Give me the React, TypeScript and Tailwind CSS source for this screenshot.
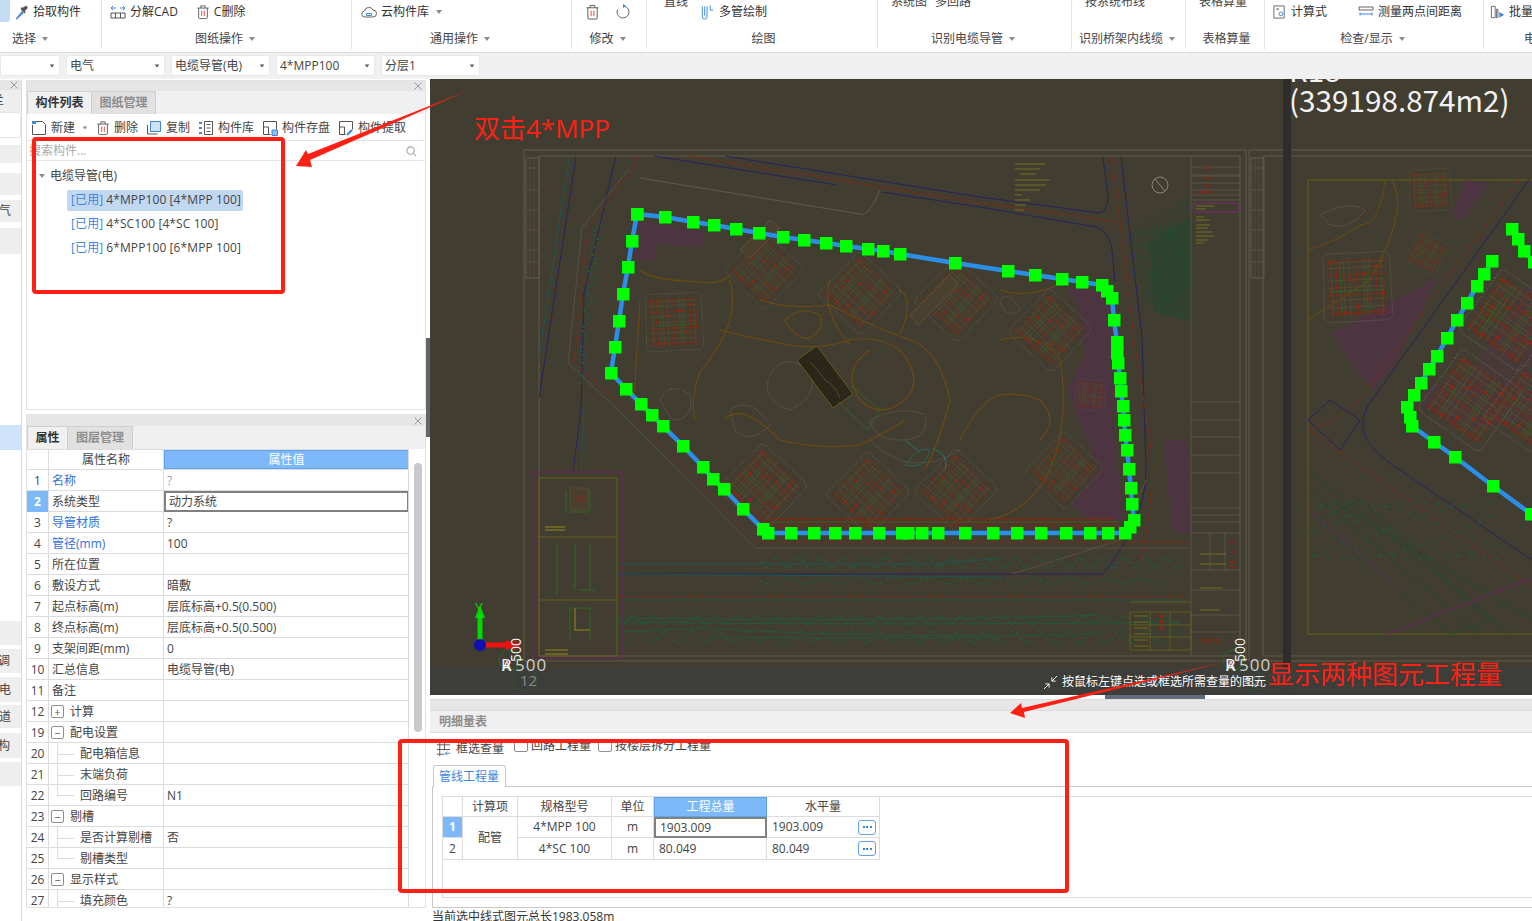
import type { ReactNode } from 'react';

const FONT = "[font-family:'Open_Sans','Noto_Sans_CJK_SC',sans-serif]";

function Caret({ className = '' }: { className?: string }) {
  return <span className={`inline-block w-0 h-0 border-x-[3.5px] border-x-transparent border-t-[4px] border-t-[#8a8a8a] ${className}`} />;
}

function Ico({ children, className = 'w-[16px] h-[16px]' }: { children: ReactNode; className?: string }) {
  return (
    <svg viewBox="0 0 16 16" fill="none" className={`shrink-0 ${className}`}>
      {children}
    </svg>
  );
}

function TrashIcon({ className }: { className?: string }) {
  return (
    <Ico className={className}>
      <path d="M1.500 3.500h13M5.500 3.500V1h5v2.500M3 3.500v10.800a1.200 1.200 0 0 0 1.200 1.200h7.600a1.200 1.200 0 0 0 1.200-1.200V3.500" stroke="#555" />
      <path d="M6.500 6.500v6M9.500 6.500v6" stroke="#e23a2e" />
    </Ico>
  );
}

function RibbonGroup({ className, label, caret = true, labelClass, children }: { className: string; label: string; caret?: boolean; labelClass?: string; children?: ReactNode }) {
  const align = labelClass ?? (caret ? 'justify-center pr-[3px]' : 'justify-center pl-[3px]');
  return (
    <div className={`h-[49px] shrink-0 flex flex-col border-r border-[#e2e2e2] ${className}`}>
      <div className="h-[29px] pt-[1px] overflow-hidden flex items-start">{children}</div>
      <div className={`h-[20px] flex items-center gap-[6px] text-[#444] ${align}`}>
        <span>{label}</span>
        {caret && <Caret />}
      </div>
    </div>
  );
}

function RibbonItem({ icon, text, className = '' }: { icon: ReactNode; text: string; className?: string }) {
  return (
    <div className={`h-[22px] flex items-center gap-[4px] whitespace-nowrap ${className}`}>
      {icon}
      <span>{text}</span>
    </div>
  );
}

function Ribbon() {
  return (
    <div className="h-[53px] shrink-0 bg-white border-b border-[#dcdcdc] flex overflow-hidden">
      <RibbonGroup className="w-[102px]" label="选择" labelClass="justify-start pl-[12px]">
        <div className="w-[10px] h-[22px] mt-[-1px] bg-[#c5dcf5] rounded-br-[3px]" />
        <RibbonItem
          className="ml-[4px]"
          text="拾取构件"
          icon={
            <Ico className="w-[15px] h-[17px]">
              <path d="M1.500 15 8.500 6.500l2 2L3 15.500z" fill="#4a86d8" />
              <path d="M7 4.500l4.500 4.500 1-1.500-1-1 2.500-2.500a1.500 1.500 0 0 0-2.500-2.500L9 3 8 2z" fill="#555" />
            </Ico>
          }
        />
      </RibbonGroup>
      <RibbonGroup className="w-[250px]" label="图纸操作">
        <RibbonItem
          className="ml-[8px]"
          text="分解CAD"
          icon={
            <Ico>
              <path d="M1 9h14v5H1zM5.500 9v5M10.500 9v5" stroke="#555" />
              <path d="M1 4h5M3 2 1 4l2 2M15 4h-5M13 2l2 2-2 2" stroke="#3b86e0" />
            </Ico>
          }
        />
        <RibbonItem className="ml-[18px]" text="C删除" icon={<TrashIcon className="w-[14px] h-[18px]" />} />
      </RibbonGroup>
      <RibbonGroup className="w-[220px]" label="通用操作">
        <RibbonItem
          className="ml-[9px]"
          text="云构件库"
          icon={
            <Ico>
              <path d="M4 13a3 3 0 0 1-.5-6A4.500 4.500 0 0 1 12 6a3.500 3.500 0 0 1 0 7z" stroke="#666" />
              <path d="M5.500 9.500h5v2h-5z" stroke="#3b86e0" />
            </Ico>
          }
        />
        <Caret className="ml-[7px] mt-[9px]" />
      </RibbonGroup>
      <RibbonGroup className="w-[75px]" label="修改">
        <div className="h-[22px] flex items-center gap-[15px] pl-[13px]">
          <TrashIcon className="w-[15px] h-[18px]" />
          <Ico>
            <path d="M8 2a6 6 0 1 1-5.500 3.600" stroke="#666" />
            <path d="M8 0v4l3-2z" fill="#3b86e0" />
          </Ico>
        </div>
      </RibbonGroup>
      <RibbonGroup className="w-[231px]" label="绘图" caret={false}>
        <span className="ml-[17px] mt-[-7px] leading-[16px] text-[#444]">直线</span>
        <RibbonItem
          className="ml-[12px]"
          text="多管绘制"
          icon={
            <Ico className="w-[15px] h-[18px]">
              <path d="M2.500 2v11a2.500 2.500 0 0 0 5 0V2M5 2v10M11 1v5h3" stroke="#3b86e0" />
            </Ico>
          }
        />
      </RibbonGroup>
      <RibbonGroup className="w-[194px]" label="识别电缆导管">
        <span className="ml-[13px] mt-[-7px] leading-[16px] text-[#444]">系统图</span>
        <span className="ml-[8px] mt-[-7px] leading-[16px] text-[#444]">多回路</span>
      </RibbonGroup>
      <RibbonGroup className="w-[114px]" label="识别桥架内线缆">
        <span className="ml-[13px] mt-[-7px] leading-[16px] text-[#444]">按系统布线</span>
      </RibbonGroup>
      <RibbonGroup className="w-[79px]" label="表格算量" caret={false}>
        <span className="ml-[13px] mt-[-7px] leading-[16px] text-[#444]">表格算量</span>
      </RibbonGroup>
      <RibbonGroup className="w-[219px]" label="检查/显示">
        <RibbonItem
          className="ml-[7px]"
          text="计算式"
          icon={
            <Ico className="w-[15px] h-[18px]">
              <path d="M2 1.500h11v13H2z" stroke="#666" />
              <path d="M5 4l2 2M7 4 5 6" stroke="#555" />
              <circle cx="9.500" cy="10" r="2" stroke="#3b86e0" />
            </Ico>
          }
        />
        <RibbonItem
          className="ml-[31px]"
          text="测量两点间距离"
          icon={
            <Ico>
              <path d="M1 3h14v3H1z" stroke="#666" />
              <path d="M2 10h12M2 8.500v3M14 8.500v3" stroke="#3b86e0" />
            </Ico>
          }
        />
      </RibbonGroup>
      <div className="w-[110px] shrink-0 h-[49px] flex flex-col">
        <div className="h-[29px] pt-[1px]">
          <RibbonItem
            className="ml-[6px]"
            text="批量选择"
            icon={
              <Ico className="w-[15px] h-[18px]">
                <path d="M1.500 2h4v12h-4zM7 5h1.500v9H7z" stroke="#666" />
                <path d="M10 8l5 3-5 3z" fill="#3b86e0" />
              </Ico>
            }
          />
        </div>
        <div className="h-[20px] flex items-center pl-[40px] text-[#444] whitespace-nowrap">电缆导管</div>
      </div>
    </div>
  );
}

function Select({ text, className = 'w-[99px]' }: { text: string; className?: string }) {
  return (
    <div className={`h-[21px] bg-white rounded-[3px] border border-[#e8e8e8] flex items-center justify-between pl-[3px] pr-[4px] ${className}`}>
      <span className="text-[#444]">{text}</span>
      <Caret className="border-t-[#555] scale-75" />
    </div>
  );
}

function SelectBar() {
  return (
    <div className="h-[26px] shrink-0 bg-[#f0f0f0] flex gap-[6px] pt-[2px]">
      <Select text="" className="w-[60px]" />
      <Select text="电气" />
      <Select text="电缆导管(电)" />
      <Select text="4*MPP100" />
      <Select text="分层1" />
    </div>
  );
}

function CloseX() {
  return (
    <svg viewBox="0 0 8 8" className="w-[8px] h-[8px]" fill="none" stroke="#9a9a9a">
      <path d="M.5.5l7 7M7.500.5l-7 7" />
    </svg>
  );
}

const railItems = [
  { cls: 'h-[22px] bg-[#eeeeee]', text: '兰', inset: 'ml-[-8px]' },
  { cls: 'h-[26px] bg-white border border-l-0 border-[#e6e6e6] rounded-r-[3px]', text: '' },
  { cls: 'h-[18px] mt-[7px] bg-[#eeeeee]', text: '' },
  { cls: 'h-[22px] mt-[10px] bg-[#eeeeee]', text: '' },
  { cls: 'h-[22px] mt-[5px] bg-[#eeeeee]', text: '气', inset: 'ml-[-1px]' },
  { cls: 'h-[26px] mt-[6px] bg-[#eeeeee]', text: '' },
  { cls: 'h-[25px] mt-[171px] bg-[#cfe4fb]', text: '' },
  { cls: 'h-[24px] mt-[171px] bg-[#eeeeee]', text: '' },
  { cls: 'h-[24px] mt-[4px] bg-[#eeeeee]', text: '调', inset: 'ml-[-2px]' },
  { cls: 'h-[25px] mt-[4px] bg-[#eeeeee]', text: '电', inset: 'ml-[-1px]' },
  { cls: 'h-[23px] mt-[3px] bg-[#eeeeee]', text: '道', inset: 'ml-[-1px]' },
  { cls: 'h-[25px] mt-[5px] bg-[#eeeeee]', text: '构', inset: 'ml-[-2px]' },
  { cls: 'h-[24px] mt-[4px] bg-[#eeeeee]', text: '' },
];

function Rail() {
  return (
    <div className="w-[22px] shrink-0 border-r border-[#dcdcdc] flex flex-col pt-[1px] overflow-hidden">
      <div className="h-[10px] bg-[#e6e6e6] shrink-0 flex items-center justify-end pr-[3px]">
        <CloseX />
      </div>
      {railItems.map((item, i) => (
        <div key={i} className={`shrink-0 flex items-center overflow-hidden text-[#444] ${item.cls}`}>
          <span className={item.inset}>{item.text}</span>
        </div>
      ))}
    </div>
  );
}

function TabStrip({ tabs }: { tabs: { label: string; w: string; active?: boolean }[] }) {
  return (
    <div className="h-[23px] bg-[#f0f0f0] flex">
      {tabs.map((t) => (
        <div
          key={t.label}
          className={`${t.w} flex items-center justify-center border border-b-0 border-[#cfcfcf] mr-[-1px] font-bold ${t.active ? 'bg-[#f0f0f0] text-[#333]' : 'bg-[#e1e1e1] text-[#8d8d8d]'}`}
        >
          {t.label}
        </div>
      ))}
    </div>
  );
}

const treeRows = [
  { label: '4*MPP100 [4*MPP 100]', active: true },
  { label: '4*SC100 [4*SC 100]' },
  { label: '6*MPP100 [6*MPP 100]' },
];

function ComponentList() {
  const tools: { text: string; icon: ReactNode; caret?: boolean }[] = [
    {
      text: '新建',
      caret: true,
      icon: (
        <Ico>
          <path d="M1.500 5v9.500h13V4.500l-3-3H5" stroke="#555" />
          <path d="M1 1h4v3H1z" fill="#3b86e0" />
        </Ico>
      ),
    },
    { text: '删除', icon: <TrashIcon className="w-[14px] h-[16px]" /> },
    {
      text: '复制',
      icon: (
        <Ico>
          <path d="M1.500 5v9h10" stroke="#555" />
          <path d="M4.500 1.500h10v10h-10z" fill="#cfe2f8" stroke="#3b86e0" />
        </Ico>
      ),
    },
    {
      text: '构件库',
      icon: (
        <Ico>
          <path d="M1 3h3M1 8h3M1 13h3" stroke="#3b86e0" strokeWidth="2" />
          <path d="M6.500 1.500h8v13h-8zM8.500 4.500h4M8.500 8h4M8.500 11.500h4" stroke="#555" />
        </Ico>
      ),
    },
    {
      text: '构件存盘',
      icon: (
        <Ico>
          <path d="M1.500 1.500h13v8M1.500 1.500v13h7M1.500 7h5v7.500" stroke="#555" />
          <path d="M10 10h5.500v5.500H10z" fill="#8fc0f3" stroke="#3b86e0" />
        </Ico>
      ),
    },
    {
      text: '构件提取',
      icon: (
        <Ico>
          <path d="M1.500 1.500h13v8M1.500 1.500v13h6M1.500 7h5v7.500" stroke="#555" />
          <path d="M9 15l5-5" stroke="#3b86e0" strokeWidth="2" />
        </Ico>
      ),
    },
  ];
  return (
    <div className="h-[330px] shrink-0 border border-[#e2e2e2] flex flex-col">
      <div className="h-[10px] bg-[#e6e6e6] flex items-center justify-end pr-[3px]">
        <CloseX />
      </div>
      <TabStrip tabs={[{ label: '构件列表', w: 'w-[65px]', active: true }, { label: '图纸管理', w: 'w-[65px]' }]} />
      <div className="h-[27px] flex items-center pl-[4px] pt-[2px] gap-[8px] border-b border-[#e6e6e6] whitespace-nowrap">
        {tools.map((t) => (
          <div key={t.text} className="flex items-center gap-[4px]">
            {t.icon}
            <span className="text-[#444]">{t.text}</span>
            {t.caret && <Caret className="ml-[3px] scale-75" />}
          </div>
        ))}
      </div>
      <div className="h-[20px] flex items-center justify-between pl-[2px] pr-[8px] pt-[1px] border-b border-[#e6e6e6] text-[#aaa]">
        <span>搜索构件...</span>
        <svg viewBox="0 0 12 12" className="w-[11px] h-[11px]" fill="none" stroke="#a8a8a8" strokeWidth="1.300">
          <circle cx="5" cy="5" r="4" />
          <path d="M8 8l3 3" />
        </svg>
      </div>
      <div className="pt-[3px] text-[#444]">
        <div className="h-[24px] flex items-center pl-[12px] gap-[5px]">
          <Caret />
          <span>电缆导管(电)</span>
        </div>
        {treeRows.map((r) => (
          <div key={r.label} className="h-[24px] flex items-center pl-[40px]">
            <div className={`h-[21px] flex items-center gap-[3px] pl-[4px] pr-[2px] tracking-[0.1px] rounded-[2px] whitespace-nowrap ${r.active ? 'bg-[#c1d8f0]' : ''}`}>
              <span className="text-[#3f85e0]">[已用]</span>
              <span>{r.label}</span>
            </div>
          </div>
        ))}
      </div>
    </div>
  );
}

type PropRow = { n: number; name: string; value?: string; link?: boolean; fold?: '+' | '-'; child?: 'mid' | 'last'; selected?: boolean; muted?: boolean };

const propRows: PropRow[] = [
  { n: 1, name: '名称', value: '?', link: true, muted: true },
  { n: 2, name: '系统类型', value: '动力系统', selected: true },
  { n: 3, name: '导管材质', value: '?', link: true },
  { n: 4, name: '管径(mm)', value: '100', link: true },
  { n: 5, name: '所在位置' },
  { n: 6, name: '敷设方式', value: '暗敷' },
  { n: 7, name: '起点标高(m)', value: '层底标高+0.5(0.500)' },
  { n: 8, name: '终点标高(m)', value: '层底标高+0.5(0.500)' },
  { n: 9, name: '支架间距(mm)', value: '0' },
  { n: 10, name: '汇总信息', value: '电缆导管(电)' },
  { n: 11, name: '备注' },
  { n: 12, name: '计算', fold: '+' },
  { n: 19, name: '配电设置', fold: '-' },
  { n: 20, name: '配电箱信息', child: 'mid' },
  { n: 21, name: '末端负荷', child: 'mid' },
  { n: 22, name: '回路编号', value: 'N1', child: 'last' },
  { n: 23, name: '剔槽', fold: '-' },
  { n: 24, name: '是否计算剔槽', value: '否', child: 'mid' },
  { n: 25, name: '剔槽类型', child: 'last' },
  { n: 26, name: '显示样式', fold: '-' },
  { n: 27, name: '填充颜色', value: '?', child: 'mid' },
];

function PropName({ row }: { row: PropRow }) {
  if (row.fold) {
    return (
      <div className="flex items-center gap-[6px] pl-[2px]">
        <span className="w-[13px] h-[13px] border border-[#8d8d8d] rounded-[2px] flex items-center justify-center text-[11px] leading-none text-[#555]">{row.fold === '+' ? '+' : '−'}</span>
        <span>{row.name}</span>
      </div>
    );
  }
  if (row.child) {
    return (
      <div className="h-full flex items-center relative pl-[31px]">
        <span className={`absolute left-[8px] top-[-1px] w-[17px] border-l border-[#dcdcdc] ${row.child === 'last' ? 'h-[11px] border-b' : 'h-[21px]'}`} />
        {row.child === 'mid' && <span className="absolute left-[8px] top-[10px] w-[17px] border-t border-[#dcdcdc]" />}
        <span>{row.name}</span>
      </div>
    );
  }
  return <span className={`pl-[3px] ${row.link ? 'text-[#2f6fe0]' : ''}`}>{row.name}</span>;
}

function PropertyTable() {
  return (
    <div className="mt-[4px] h-[494px] shrink-0 border border-[#e2e2e2] flex flex-col overflow-hidden">
      <div className="h-[11px] bg-[#e6e6e6] flex items-center justify-end pr-[3px]">
        <CloseX />
      </div>
      <TabStrip tabs={[{ label: '属性', w: 'w-[41px]', active: true }, { label: '图层管理', w: 'w-[66px]' }]} />
      <div className="flex-1 flex overflow-hidden text-[#444]">
        <div className="w-[382px] shrink-0 border-r border-[#dcdcdc] overflow-hidden">
          <div className="h-[21px] grid grid-cols-[22px_115px_245px] border-y border-[#dcdcdc]">
            <div className="border-r border-[#dcdcdc]" />
            <div className="flex items-center justify-center border-r border-[#dcdcdc]">属性名称</div>
            <div className="flex items-center justify-center bg-[#7db9fa] text-white border border-[#5da4ee]">属性值</div>
          </div>
          {propRows.map((r) => (
            <div key={r.n} className="h-[21px] grid grid-cols-[22px_115px_245px] border-b border-[#dcdcdc]">
              <div className={`flex items-center justify-center pt-[1px] border-r border-[#dcdcdc] ${r.selected ? 'bg-[#7db9fa] text-white font-bold' : ''}`}>{r.n}</div>
              <div className="flex items-center pt-[1px] border-r border-[#dcdcdc] whitespace-nowrap">
                <PropName row={r} />
              </div>
              <div className={`flex items-center pt-[1px] pl-[3px] ${r.selected ? 'border-2 border-[#808080]' : ''} ${r.muted ? 'text-[#999]' : ''}`}>{r.value}</div>
            </div>
          ))}
        </div>
        <div className="flex-1 pt-[14px] pl-[5px]">
          <div className="w-[8px] h-[269px] rounded-[4px] bg-[#c9c9c9]" />
        </div>
      </div>
    </div>
  );
}

// nodes of the selected conduit, in page coordinates
const route = [
  [637, 214], [665, 217], [693, 222], [714, 225], [736, 229], [759, 233], [783, 237], [804, 240], [826, 243], [846, 246], [868, 249], [883, 251], [900, 254], [955, 263],
  [1008, 271], [1035, 275], [1062, 279], [1082, 282], [1102, 285], [1107, 291], [1112, 298], [1114, 320], [1117, 342], [1117, 353], [1118, 363], [1120, 378], [1121, 391], [1123, 406],
  [1124, 420], [1125, 435], [1127, 450], [1129, 469], [1131, 488], [1132, 504], [1134, 520], [1130, 527], [1125, 533], [1108, 533], [1090, 533], [1066, 533], [1041, 533], [1017, 533], [993, 533],
  [965, 533], [938, 533], [922, 533], [908, 533], [902, 533], [879, 533], [855, 533], [835, 533], [814, 533], [791, 533], [768, 533], [763, 529], [743, 509], [724, 489], [713, 479], [703, 467], [683, 446],
  [663, 426], [652, 415], [641, 404], [626, 389], [611, 373], [615, 347], [619, 321], [623, 294], [628, 267], [632, 241], [637, 214],
];

const routeRight = [
  [1531, 514], [1493, 486], [1455, 457], [1434, 442], [1412, 426], [1410, 417], [1407, 407], [1414, 395], [1421, 383], [1429, 369], [1437, 356], [1447, 338], [1457, 320], [1467, 303], [1477, 286], [1484, 274], [1492, 261],
];
const routeRightTop = [[1512, 229], [1518, 239], [1524, 251], [1534, 262]];

const pts = (list: number[][]) => list.map((p) => p.join(',')).join(' ');
const grid = [-28, -22, -14, -8, 0, 8, 14, 22, 28];

// one residential block of the site plan
function Block({ x, y, r, s = 1 }: { x: number; y: number; r: number; s?: number }) {
  return (
    <g transform={`translate(${x} ${y}) rotate(${r}) scale(${s})`} fill="none">
      <path d="M-36 -26Q-40 -40 -26 -38L26 -38Q40 -40 38 -26L38 26Q40 40 26 38L-26 38Q-40 40 -38 26Z" stroke="#8a8470" strokeWidth="0.600" strokeDasharray="1 1.500" />
      <rect x="-30" y="-30" width="60" height="60" stroke="#6e2a18" />
      {grid.map((g, i) => (
        <g key={g}>
          <path d={`M${g} -32V32`} stroke={i % 3 === 1 ? '#7c2c18' : '#544a30'} strokeWidth={1.100} />
          <path d={`M-32 ${g}H32`} stroke={i % 3 === 2 ? '#7c2c18' : '#544a30'} strokeWidth={1.100} />
        </g>
      ))}
      <path d="M-18 -30V30M11 -30V30M-30 4H30" stroke="#2d6b22" strokeWidth="0.700" />
      {grid.map((g, i) => (
        <rect key={i} x={g - 2} y={grid[(i * 4) % 9] - 2} width="4" height="3" fill="#8f2414" />
      ))}
    </g>
  );
}

// scattered shrub marks along a band of the plan
function Shrubs({ x1, x2, y, n, spread = 6 }: { x1: number; x2: number; y: number; n: number; spread?: number }) {
  return (
    <g fill="#24563a">
      {Array.from({ length: n }, (_, i) => (
        <rect key={i} x={x1 + ((x2 - x1) * i) / n} y={y + Math.sin(i * 7.300) * spread} width="2.500" height="2" />
      ))}
    </g>
  );
}

function Drawing() {
  return (
    <svg viewBox="430 79 1102 616" className="absolute inset-0 w-[1102px] h-[616px]" fill="none">
      {/* sheet frames */}
      <g stroke="#5f5a4a">
        <path d="M524 150H1246V661H524Z" />
        <path d="M539 156H1240V656H539Z" />
        <path d="M1249 150H1532M1249 150V661H1532M1263 156H1532M1263 156V656H1532" />
        <path d="M526 158H539V278H526ZM1251 158H1264V278H1251Z" />
        <path d="M526 168H539M526 190H539M526 210H539M526 230H539M526 250H539M526 262H539M1251 168H1264M1251 190H1264M1251 210H1264M1251 230H1264M1251 250H1264M1251 262H1264" strokeWidth="0.700" />
        <path d="M530 158V278M534 158V278M1255 158V278M1259 158V278" strokeWidth="0.500" />
      </g>
      <path d="M1308 180H1532M1308 180V634H1532" stroke="#655f14" />

      {/* purple hatch areas */}
      <g fill="#4c3540">
        <path d="M637 220L704 232L702 248L658 243L654 262L634 258Z" />
        <path d="M1066 287L1112 292L1118 345L1112 420L1124 520L1090 520L1072 505L1100 470L1076 412L1068 390L1086 352L1080 310Z" />
        <path d="M1332 333L1438 277L1395 363L1374 390L1358 372Z" />
        <path d="M1466 180L1490 183L1462 220L1452 216Z" />
        <path d="M1164 440L1188 441L1191 535L1172 530Z" />
        <path d="M1412 402L1430 385L1470 375L1490 340L1532 280V420L1470 430Z" fillOpacity="0.500" />
      </g>

      {/* outer roads */}
      <g strokeWidth="1">
        <path d="M654 156L837 185M725 156L980 197L1100 213Q1108 210 1108 197L1103 157" stroke="#25245f" />
        <path d="M882 192L980 207L1096 227Q1110 232 1112 250L1115 282" stroke="#25245f" />
        <path d="M690 156L980 203L1119 222" stroke="#7f2a16" strokeDasharray="6 2" />
        <path d="M640 178L860 214Q868 218 880 190" stroke="#5f5a4a" />
        <path d="M1121 157L1142 337L1146 470Q1146 520 1103 574H617" stroke="#25245f" />
        <path d="M1112 157L1135 347L1150 440Q1156 500 1140 560" stroke="#7f2a16" strokeDasharray="6 2" />
        <path d="M1146 480L1120 540L1012 574" stroke="#5f4f33" />
        <path d="M576 157L539 398M616 156L584 293L581 410L573 472" stroke="#25245f" />
        <path d="M569 158L539 357M584 410L581 472" stroke="#1f5550" />
        <path d="M637 157L634 168L588 227L574 363L626 408L756 542H1190" stroke="#7f2a16" strokeDasharray="5 2" />
        <path d="M628 170L582 228L568 363L620 412L755 548H1190" stroke="#5f5a4a" strokeWidth="0.700" />
        <path d="M770 519H1116M765 526H1120" stroke="#7f2a16" strokeDasharray="6 1.500" strokeWidth="1.400" />
        <path d="M770 522H1118" stroke="#6a4a10" />
        <path d="M640 300L634 400L752 518" stroke="#6a4a10" />
        <path d="M646 400L760 520" stroke="#7f2a16" strokeDasharray="4 2" />
        <path d="M617 564H940L1000 558M617 574L1000 577" stroke="#1f5550" />
        <path d="M617 597H1190" stroke="#7f2a16" strokeDasharray="7 3" />
        <path d="M617 600H1190M617 618Q900 622 1100 615M617 622Q900 626 1180 622M617 632L700 628Q900 640 1100 634M710 638H1000" stroke="#24563a" />
      </g>
      <g fill="#24563a">
        {Array.from({ length: 40 }, (_, i) => (
          <rect key={i} x={596 - i * 0.450 + Math.sin(i * 5) * 3} y={226 + i * 4} width="2.500" height="2" />
        ))}
      </g>
      <Shrubs x1={760} x2={1180} y={562} n={120} spread={5} />
      <Shrubs x1={760} x2={1160} y={580} n={70} spread={3} />
      <Shrubs x1={617} x2={1180} y={619} n={170} spread={4} />
      <Shrubs x1={617} x2={1180} y={636} n={130} spread={6} />

      {/* green hedge block */}
      <g stroke="#1f4a30" strokeWidth="0.800">
        {Array.from({ length: 16 }, (_, i) => (
          <path key={i} d={`M${1131 + i * 4} ${228 - i * 2}L${1146 + i * 3} ${303 - (i > 8 ? (i - 8) * 2 : 0)}`} />
        ))}
        <path d="M1150 240L1176 225L1191 218V320L1155 312Z" fill="#1f4a30" fillOpacity="0.400" />
        <path d="M1146 300L1191 322M1148 290L1191 312M1156 246L1186 232M1160 238L1190 226" />
      </g>

      {/* roads and paths in the site */}
      <g stroke="#6a4a10" strokeWidth="1.200">
        <path d="M640 270Q650 280 700 282Q720 285 730 275M730 280Q735 300 730 320Q725 340 700 372Q690 400 695 420" />
        <path d="M760 300Q790 310 830 305Q880 330 910 340Q940 350 950 400Q940 440 925 470" />
        <path d="M720 330Q760 340 790 345Q820 350 850 340Q880 335 900 350Q925 380 905 400Q880 420 860 400Q840 370 870 350" />
        <path d="M785 320Q800 305 820 315Q825 330 810 338Q795 340 785 320Z" />
        <path d="M725 420Q740 400 780 440Q820 450 860 445Q890 430 905 420" />
        <path d="M960 440Q980 400 1000 395Q1020 392 1040 400Q1060 420 1040 440" />
        <path d="M830 280Q820 310 850 345M900 290Q915 300 900 335M1000 290Q1030 300 1070 280" />
        <path d="M1000 340Q1040 330 1060 360Q1070 420 1050 470Q1030 510 990 520" />
      </g>
      <g stroke="#8a8470" strokeWidth="0.500" strokeDasharray="1 1">
        <path d="M770 375Q785 350 810 372Q820 395 790 410Q760 400 770 375Z" />
        <path d="M730 410Q750 395 770 425Q750 445 735 430Z" />
        <path d="M660 400Q670 380 690 395Q695 420 672 420Z" />
        <path d="M870 420Q900 405 925 415Q930 440 900 440Q875 440 870 420Z" />
        <path d="M1000 300Q1010 290 1020 310Q1005 320 1000 300Z" />
        <path d="M870 440Q910 480 960 450" />
      </g>

      {/* blocks */}
      <Block x={764} y={270} r={43} s={0.750} />
      <Block x={674} y={322} r={-3} s={0.750} />
      <Block x={860} y={293} r={43} s={0.800} />
      <Block x={956} y={300} r={43} s={0.800} />
      <Block x={1050} y={330} r={43} s={0.800} />
      <Block x={1064} y={470} r={43} s={0.750} />
      <Block x={763} y={487} r={43} s={0.850} />
      <Block x={868} y={493} r={43} s={0.800} />
      <Block x={956} y={490} r={43} s={0.800} />
      <Block x={1090} y={395} r={5} s={0.400} />
      <Block x={1357} y={287} r={-3} s={0.900} />
      <Block x={1427} y={253} r={30} s={0.450} />
      <Block x={1430} y={190} r={-3} s={0.550} />
      <Block x={1510} y={320} r={35} s={1} />
      <Block x={1470} y={400} r={35} s={1} />
      <Block x={1530} y={410} r={35} s={0.900} />
      <path d="M740 250L770 220L780 228L750 258ZM910 315L950 275L958 285L918 325Z" stroke="#5f4f33" fill="#4a4030" />

      {/* pond */}
      <path d="M797 360L817 346L853 394L833 408Z" fill="#2a261a" stroke="#6a5a20" />
      <path d="M810 362Q820 372 825 380Q835 385 840 398" stroke="#6a5a20" strokeWidth="0.700" />
      <path d="M850 385L880 410L868 430L838 402" stroke="#2d6b22" strokeWidth="0.800" />
      <path d="M905 465Q920 445 930 450Q925 470 905 465Z" stroke="#1f6a60" />
      <path d="M905 440L920 452M932 448Q950 455 945 470" stroke="#1f7a70" />

      {/* detail sheets bottom-left */}
      <path d="M534 472H622V658H534Z" stroke="#6e2560" />
      <path d="M539 478H617V656H539ZM539 537H617M539 600H617" stroke="#65601c" />
      <path d="M570 488H588V510H570Z" stroke="#5a4a2a" fill="#4a4030" />
      <circle cx="580" cy="499" r="3" stroke="#8f2414" />
      <path d="M566 490V512M590 490V512M570 512H588M557 543V595M575 545V590M590 545V590M580 590H595M570 608V640M590 608V640M570 608H590" stroke="#2d6b22" />
      <path d="M575 608V630H590M545 650H568M545 654H568M545 527H565M545 530H565" stroke="#787020" strokeWidth="1.500" />

      {/* title column */}
      <g stroke="#5f5a4a" strokeWidth="0.800">
        <path d="M1191 156V656M1191 167H1240M1191 176H1240M1191 175H1240M1191 183H1240M1191 190H1240M1191 195H1240M1191 200H1240" />
        <path d="M1191 402H1240M1191 420H1240M1191 437H1240M1191 455H1240M1191 473H1240M1191 508H1240M1191 533H1240M1191 570H1240M1191 590H1240M1191 615H1240M1191 632H1240" />
        <path d="M1191 515H1240M1191 522H1240M1210 533V570M1225 533V570" />
      </g>
      <rect x="1193" y="203" width="46" height="9" rx="3" stroke="#7a2a78" />
      <g stroke="#72701e" strokeWidth="1.200">
        <path d="M1196 206H1214M1196 209H1206M1196 217H1204M1196 220H1210M1196 225H1210M1196 228H1208M1196 232H1212M1196 236H1214M1196 240H1208M1196 243H1204" />
        <path d="M1015 164H1045M1015 169H1040M1020 174H1036M1015 180H1050M1015 185H1046M1015 190H1040M1015 195H1022M1015 200H1030M1015 205H1026M1015 210H1024" />
        <path d="M1200 554H1226M1200 564H1226M1200 588H1222M1200 610H1220" />
      </g>
      <g stroke="#8f2414" strokeWidth="1.500">
        <path d="M1197 192H1212M1203 168H1210M1203 178H1209M1203 186H1209M1230 542H1236M1230 552H1236M1230 562H1236M1230 567H1236" />
      </g>
      <circle cx="1160" cy="185" r="8" stroke="#8a8470" />
      <path d="M1155 179L1165 191" stroke="#8a8470" />
      <text x="1198" y="643" fill="#6e2d18" fontSize="7" fontWeight="700">CAROL</text>

      {/* legend table */}
      <path d="M1130 602H1191M1130 612H1191V650H1130V612ZM1130 625H1191M1130 637H1191M1150 612V650M1170 612V650" stroke="#6a641c" strokeWidth="0.800" />
      <path d="M1134 616H1148M1134 622H1148M1134 628H1148M1134 634H1148M1134 640H1148M1134 646H1148" stroke="#7a6a10" />
      <path d="M1160 616h4M1160 622h4M1160 628h4" stroke="#8f2414" strokeWidth="3" />

      {/* right sheet roads */}
      <g strokeWidth="1">
        <path d="M1529 180L1367 407Q1350 440 1400 470L1532 560" stroke="#25245f" />
        <path d="M1519 180L1360 400Q1330 425 1309 430L1532 587" stroke="#7f2a16" strokeDasharray="6 3" />
        <path d="M1309 470L1510 634M1309 490L1480 634M1330 500L1532 620" stroke="#1f4a30" />
        <path d="M1318 520L1360 500L1490 620L1450 634Z" stroke="#1f4a30" />
        <path d="M1388 634L1532 578M1310 510L1400 590" stroke="#6e2560" />
        <path d="M1308 320L1370 280Q1410 210 1392 180M1308 250Q1340 240 1360 225Q1380 225 1385 180" stroke="#6a4a10" />
        <path d="M1308 420L1330 400L1360 420L1340 450Z" stroke="#25245f" />
      </g>
      <Shrubs x1={1310} x2={1500} y={530} n={90} spread={28} />
      <path d="M1320 215Q1350 200 1365 210Q1350 230 1330 225Z" stroke="#8a8470" strokeWidth="0.500" strokeDasharray="1 1" />

      {/* conduit */}
      <polyline points={pts(route)} stroke="#2b8fe8" strokeWidth="4.500" />
      <polyline points={pts(routeRight)} stroke="#2b8fe8" strokeWidth="4.500" />
      <polyline points={pts(routeRightTop)} stroke="#2b8fe8" strokeWidth="4.500" />
      <g fill="#00ff00">
        {[...route, ...routeRight, ...routeRightTop].map(([x, y], i) => (
          <rect key={i} x={x - 6} y={y - 6} width="12.500" height="12.500" />
        ))}
      </g>

      {/* sheet seam */}
      <rect x="1283" y="79" width="8" height="616" fill="#2e2d2a" />

      <text x="1289" y="112" fill="#f2f2f2" fontSize="29.700" fontFamily="'Noto Sans CJK SC',sans-serif">(339198.874m2)</text>
      <text x="1289" y="82" fill="#f2f2f2" fontSize="29.700" fontFamily="'Noto Sans CJK SC',sans-serif">R18</text>
    </svg>
  );
}

// grid-axis bubbles that sit on the lower edge of the sheet
function AxisMark({ x }: { x: number }) {
  return (
    <g fill="none" fontFamily="'Open Sans',sans-serif">
      <circle cx={x + 8} cy={660} r="10" stroke="#1f6a2a" />
      <circle cx={x + 24} cy={679} r="12" stroke="#1f6a2a" strokeOpacity="0.600" />
      <text x={x} y={671} fontSize="17" fill="#f2f2f2">R</text>
      <text x={x + 1} y={671} fontSize="15" fill="#f2f2f2">A</text>
      <text x={x + 14} y={671} fontSize="17" fill="#cfcfcf" letterSpacing="1">500</text>
      <text transform={`translate(${x + 20} 662) rotate(-90)`} fontSize="14" fill="#f2f2f2">500</text>
      <text x={x + 19} y={686} fontSize="15" fill="#8a8a8a">12</text>
    </g>
  );
}

function CanvasArea() {
  return (
    <div className="h-[616px] shrink-0 relative overflow-hidden bg-[#423d31]">
      <Drawing />
      <div className="absolute left-0 right-0 bottom-0 h-[27px] bg-[#3d3d3b] opacity-95" />
      <svg viewBox="430 79 1102 616" className="absolute inset-0 w-[1102px] h-[616px]" fill="none">
        <path d="M480 640V617" stroke="#00d800" strokeWidth="5" />
        <path d="M480 605L475 618H485Z" fill="#00d800" />
        <text x="475" y="613" fontSize="14" fill="#00d800">Y</text>
        <path d="M484 645H508" stroke="#f01010" strokeWidth="5" />
        <path d="M518 645L506 640V650Z" fill="#f01010" />
        <text x="513" y="650" fontSize="14" fill="#f01010">X</text>
        <circle cx="480" cy="645" r="6" fill="#1010b0" />
        <AxisMark x={501} />
        <AxisMark x={1225} />
      </svg>
      <div className="absolute left-[613px] bottom-[5px] flex items-center gap-[4px] text-white whitespace-nowrap">
        <svg viewBox="0 0 16 16" className="w-[15px] h-[15px]" fill="none" stroke="#fff" strokeWidth="1">
          <path d="M15 1L9.500 6.500M9.500 2.500V6.500H13.500M1 15L6.500 9.500M2.500 9.500H6.500V13.500" />
        </svg>
        <span>按鼠标左键点选或框选所需查量的图元</span>
      </div>
    </div>
  );
}

const qtyRows = [
  { n: 1, spec: '4*MPP 100', unit: 'm', total: '1903.009', flat: '1903.009' },
  { n: 2, spec: '4*SC 100', unit: 'm', total: '80.049', flat: '80.049' },
];

function MoreButton() {
  return (
    <div className="w-[18px] h-[15px] border border-[#5ba3ee] rounded-[3px] flex items-center justify-center gap-[1.500px]">
      <span className="w-[2px] h-[2px] bg-[#3b86e0]" />
      <span className="w-[2px] h-[2px] bg-[#3b86e0]" />
      <span className="w-[2px] h-[2px] bg-[#3b86e0]" />
    </div>
  );
}

function QuantityTable() {
  const cell = 'flex items-center border-r border-b border-[#dcdcdc]';
  return (
    <div className="flex-1 flex flex-col min-h-0 text-[#444]">
      <div className="h-[4px] shrink-0 flex justify-start pl-[675px]">
        <div className="w-[100px] h-[4px] bg-[#5f6b7a]" />
      </div>
      <div className="h-[12px] shrink-0 bg-[#e6e6e6] border-y border-[#dcdcdc]" />
      <div className="h-[22px] shrink-0 bg-[#f0f0f0] border-b border-[#dcdcdc] flex items-center pl-[9px] pt-[1px] text-[#8d8d8d] font-bold">明细量表</div>
      <div className="h-[32px] shrink-0 flex items-start whitespace-nowrap">
        <div className="flex items-center gap-[5px] ml-[6px] mt-[8px]">
          <Ico className="w-[15px] h-[15px]">
            <path d="M1 3h14M1 8h14M1 13h8M4 1v14M9 1v8" stroke="#555" />
            <path d="M15 12H10M12 10l-2 2 2 2" stroke="#3b86e0" />
          </Ico>
          <span>框选查量</span>
        </div>
        <span className="ml-[10px] mt-[7px] w-[14px] h-[12px] border border-[#8d8d8d] rounded-[2px]" />
        <span className="ml-[3px] mt-[5px]">回路工程量</span>
        <span className="ml-[7px] mt-[7px] w-[14px] h-[12px] border border-[#8d8d8d] rounded-[2px]" />
        <span className="ml-[3px] mt-[5px]">按楼层拆分工程量</span>
      </div>
      <div className="h-[21px] shrink-0 flex pl-[3px]">
        <div className="w-[73px] h-[22px] border border-b-0 border-[#c9c9c9] rounded-t-[3px] bg-white flex items-center justify-center pr-[1px] text-[#3b86e0] relative z-10">管线工程量</div>
      </div>
      <div className="ml-[2px] h-[122px] shrink-0 border border-r-0 border-[#c9c9c9] pt-[9px] pl-[9px]">
        <div className="h-[102px] border-l border-t border-b border-[#dcdcdc]">
          <div className="w-[437px] grid grid-cols-[20px_55px_94px_42px_113px_113px] grid-rows-[20px_21px_22px] text-center">
            <div className={cell} />
            <div className={`${cell} justify-center`}>计算项</div>
            <div className={`${cell} justify-center`}>规格型号</div>
            <div className={`${cell} justify-center`}>单位</div>
            <div className="flex items-center justify-center bg-[#7db9fa] border border-[#5da4ee] text-white">工程总量</div>
            <div className={`${cell} justify-center`}>水平量</div>
            <div className={`${cell} justify-center bg-[#7db9fa] text-white font-bold`}>1</div>
            <div className={`${cell} justify-center row-span-2`}>配管</div>
            <div className={`${cell} justify-center`}>{qtyRows[0].spec}</div>
            <div className={`${cell} justify-center`}>{qtyRows[0].unit}</div>
            <div className="flex items-center pl-[4px] border-2 border-[#808080]">{qtyRows[0].total}</div>
            <div className={`${cell} justify-between pl-[5px] pr-[3px]`}>
              {qtyRows[0].flat}
              <MoreButton />
            </div>
            <div className={`${cell} justify-center`}>{qtyRows[1].n}</div>
            <div className={`${cell} justify-center`}>{qtyRows[1].spec}</div>
            <div className={`${cell} justify-center`}>{qtyRows[1].unit}</div>
            <div className={`${cell} pl-[5px]`}>{qtyRows[1].total}</div>
            <div className={`${cell} justify-between pl-[5px] pr-[3px]`}>
              {qtyRows[1].flat}
              <MoreButton />
            </div>
          </div>
        </div>
      </div>
      <div className="pl-[2px] pt-[1px] h-[16px] leading-[16px] whitespace-nowrap text-[#333]">当前选中线式图元总长1983.058m</div>
    </div>
  );
}

function Annotations() {
  return (
    <>
      <div className="absolute left-[32px] top-[137px] w-[253px] h-[157px] border-[4px] border-[#ff2015] rounded-[4px]" />
      <div className="absolute left-[398px] top-[739px] w-[671px] h-[154px] border-[4px] border-[#ff2015] rounded-[4px]" />
      <svg viewBox="0 0 1532 921" className="absolute inset-0 w-[1532px] h-[921px] pointer-events-none">
        <polygon points="296,166 306,150 308,154 467,91 310,160 312,167" fill="#ff2015" />
        <polygon points="1010,713 1021,703 1022,708 1225,662 1024,712 1025,718" fill="#ff2015" />
      </svg>
      <span className="absolute left-[474px] top-[109px] text-[26px] leading-[38px] text-[#ff2015] whitespace-nowrap">双击4*MPP</span>
      <span className="absolute left-[1268px] top-[655px] text-[26px] leading-[38px] text-[#ff2015] whitespace-nowrap">显示两种图元工程量</span>
    </>
  );
}

export default function App() {
  return (
    <div className={`relative w-[1532px] h-[921px] overflow-hidden bg-white text-[12px] leading-[16px] text-[#333] flex flex-col ${FONT}`}>
      <Ribbon />
      <SelectBar />
      <div className="flex-1 flex min-h-0">
        <Rail />
        <div className="w-[4px] shrink-0" />
        <div className="w-[400px] shrink-0 flex flex-col pt-[1px]">
          <ComponentList />
          <PropertyTable />
        </div>
        <div className="w-[4px] shrink-0">
          <div className="mt-[259px] h-[99px] bg-[#5f6670]" />
        </div>
        <div className="w-[1102px] shrink-0 flex flex-col">
          <CanvasArea />
          <QuantityTable />
        </div>
      </div>
      <Annotations />
    </div>
  );
}
